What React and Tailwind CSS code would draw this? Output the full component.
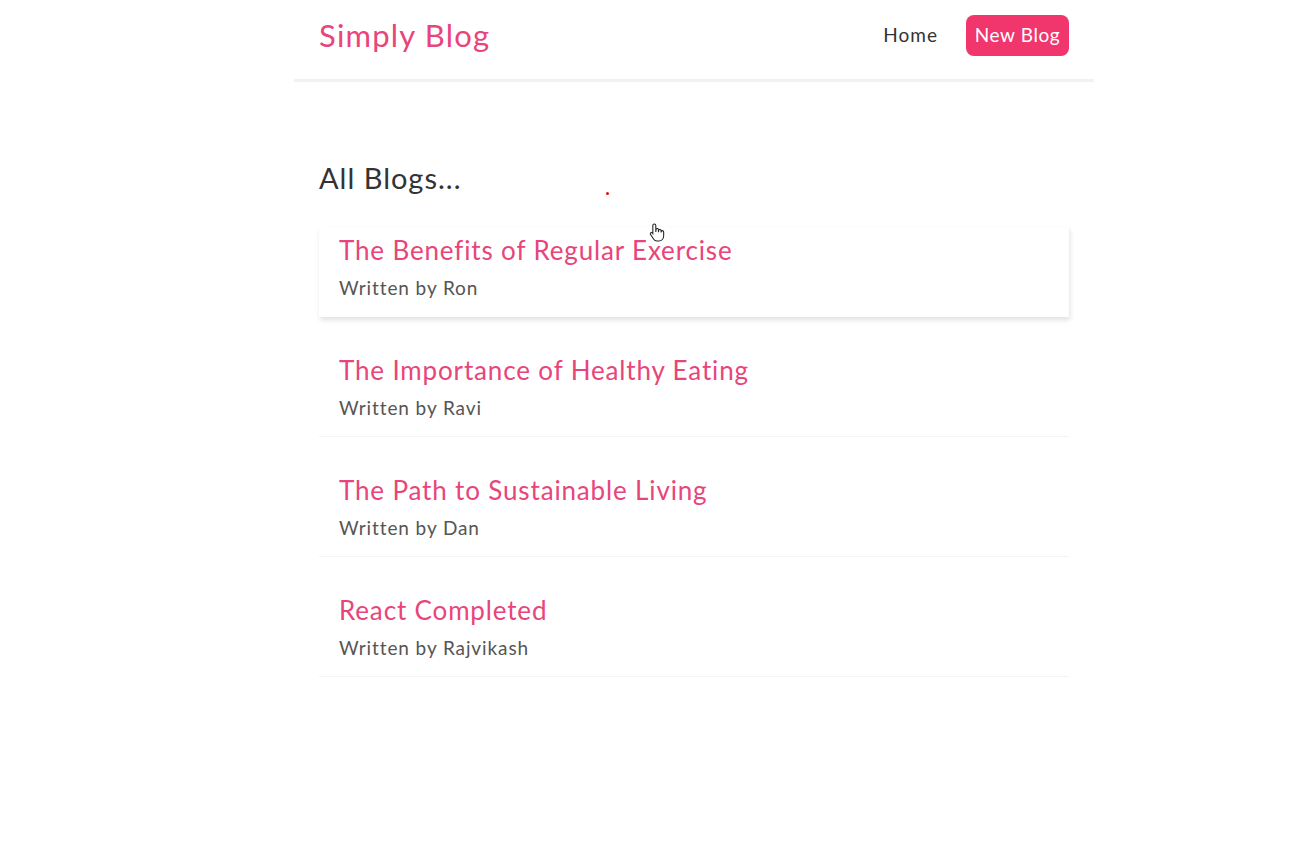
import React from "react";

const blogs = [
  { title: "The Benefits of Regular Exercise", author: "Ron", hover: true },
  { title: "The Importance of Healthy Eating", author: "Ravi" },
  { title: "The Path to Sustainable Living", author: "Dan" },
  { title: "React Completed", author: "Rajvikash" },
];

function HandCursor() {
  return (
    <svg width="17" height="22" viewBox="0 0 16 20" className="absolute left-[355px] top-[140px]">
      <path
        d="M5 1.5c.8 0 1.4.6 1.4 1.4V9l.2-2.2c.1-.7.7-1.1 1.3-1 .6.1 1 .6 1 1.2v2.2l.2-1.6c.1-.6.7-1 1.3-.9.6.1 1 .6 1 1.2v1.6l.2-.9c.2-.6.7-.9 1.3-.8.6.1.9.6.9 1.2v3.6c0 2.7-1.7 4.9-4.5 4.9H7.4c-1.3 0-2.3-.6-3-1.6L1.5 11.4c-.4-.6-.2-1.3.3-1.6.5-.3 1.2-.2 1.6.3l.2.3V2.9c0-.8.6-1.4 1.4-1.4z"
        fill="#fff"
        stroke="#222"
        strokeWidth="1"
      />
    </svg>
  );
}

export default function App() {
  return (
    <div className="min-h-[868px] bg-white text-[#333]" style={{ fontFamily: "Lato, 'Noto Sans', sans-serif" }}>
      <nav className="ml-[294px] flex h-[82px] w-[800px] items-center justify-between border-b-[3px] border-[#f2f2f2] px-[25px] pb-[9px]">
        <h1 className="text-[31px] font-normal leading-none tracking-[1.2px] text-[#e8457a]">Simply Blog</h1>
        <div className="flex items-center gap-[28px]">
          <a className="text-[19px] tracking-[1px] text-[#333]">Home</a>
          <a className="flex h-[41px] w-[103px] items-center justify-center rounded-[8px] bg-[#f1356d] text-[19px] tracking-[0.6px] text-white">New Blog</a>
        </div>
      </nav>
      <main className="relative ml-[294px] w-[800px] px-[25px] pt-[78px]">
        <h2 className="text-[29px] font-normal leading-[36px] tracking-[1px] text-[#333]">All Blogs...</h2>
        <span className="absolute left-[312px] top-[110px] h-[3px] w-[3px] rounded-full bg-[#ff0000]" />
        <HandCursor />
        <div className="mt-[31px] flex flex-col gap-[30px]">
          {blogs.map((b) => (
            <div
              key={b.title}
              className={
                "flex h-[90px] flex-col px-[20px] pt-[7px] " +
                (b.hover ? "shadow-[1px_3px_5px_rgba(0,0,0,0.12)]" : "border-b border-[#f4f4f4]")
              }
            >
              <h3 className="text-[26px] font-normal leading-[32px] tracking-[0.85px] text-[#e8457a]">{b.title}</h3>
              <p className="mt-[10px] text-[19px] leading-[24px] tracking-[0.9px] text-[#555]">Written by {b.author}</p>
            </div>
          ))}
        </div>
      </main>
    </div>
  );
}
